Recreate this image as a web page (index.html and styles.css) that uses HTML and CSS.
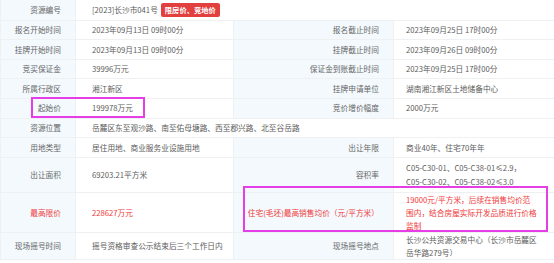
FILE: index.html
```html
<!DOCTYPE html>
<html lang="zh-CN">
<head>
<meta charset="utf-8">
<link rel="stylesheet" href="styles.css">
</head>
<body>
<div class="wrap">
<table class="info">
  <colgroup>
    <col class="c1"><col class="c2"><col class="c3"><col class="c4">
  </colgroup>
  <tr class="r">
    <th>资源编号</th>
    <td colspan="3">[2023]长沙市041号<span class="tag">限房价、竞地价</span></td>
  </tr>
  <tr class="r">
    <th>报名开始时间</th><td>2023年09月13日 09时00分</td>
    <th>报名截止时间</th><td>2023年09月25日 17时00分</td>
  </tr>
  <tr class="r">
    <th>挂牌开始时间</th><td>2023年09月13日 09时00分</td>
    <th>挂牌截止时间</th><td>2023年09月26日 09时00分</td>
  </tr>
  <tr class="r">
    <th>竞买保证金</th><td>39996万元</td>
    <th>保证金到账截止时间</th><td>2023年09月25日 17时00分</td>
  </tr>
  <tr class="r">
    <th>所属行政区</th><td>湘江新区</td>
    <th>挂牌申请单位</th><td>湖南湘江新区土地储备中心</td>
  </tr>
  <tr class="r">
    <th>起始价</th><td>199978万元</td>
    <th>竞价增价幅度</th><td>2000万元</td>
  </tr>
  <tr class="r">
    <th>资源位置</th>
    <td colspan="3">岳麓区东至观沙路、南至佑母塘路、西至郡兴路、北至谷岳路</td>
  </tr>
  <tr class="r">
    <th>用地类型</th><td>居住用地、商业服务业设施用地</td>
    <th>出让年限</th><td>商业40年、住宅70年年</td>
  </tr>
  <tr class="m area">
    <th>出让面积</th><td>69203.21平方米</td>
    <th>容积率</th><td>C05-C30-01、C05-C38-01≤2.9，<br>C05-C30-02、C05-C38-02≤3.0</td>
  </tr>
  <tr class="m red">
    <th>最高限价</th><td>228627万元</td>
    <th>住宅(毛坯)最高销售均价（元/平方米）</th><td>19000元/平方米，后续在销售均价范<br>围内，结合房屋实际开发品质进行价格<br>监制</td>
  </tr>
  <tr class="m last">
    <th>现场摇号时间</th><td>摇号资格审查公示结束后三个工作日内</td>
    <th>现场摇号地点</th><td>长沙公共资源交易中心（长沙市岳麓区<br>岳华路279号）</td>
  </tr>
</table>
<div class="mark mark-a"></div>
<div class="mark mark-b"></div>
</div>
</body>
</html>
```
FILE: styles.css
```css
html, body {
  margin: 0;
  padding: 0;
  background: #ffffff;
}
body {
  font-family: "Noto Sans CJK SC", "Open Sans", sans-serif;
  font-size: 7.7px;
  color: #666666;
}
.wrap {
  position: relative;
  width: 554px;
  height: 263px;
  overflow: hidden;
}
.info {
  border-collapse: collapse;
  table-layout: fixed;
  width: 554px;
  margin-top: -1px;
}
.c1 { width: 75px; }
.c2 { width: 158px; }
.c3 { width: 160px; }
.c4 { width: 161px; }
.info th, .info td {
  border: 1px solid #eef0f2;
  line-height: 11.6px;
  padding-top: 3.5px;
  padding-bottom: 3.5px;
  vertical-align: middle;
  white-space: nowrap;
}
.info th {
  background: #f3f9fd;
  font-weight: normal;
  text-align: right;
  padding-left: 4px;
  padding-right: 14px;
}
.info td {
  text-align: left;
  padding-left: 16px;
  padding-right: 8px;
  color: #5c5c5c;
}
.info td + th + td {
  padding-left: 12px;
}
.info tr.area th, .info tr.area td {
  line-height: 14px;
  padding-top: 3px;
  padding-bottom: 3px;
}
.info tr.red th, .info tr.red td {
  color: #f0383a;
  line-height: 13px;
  padding-top: 0;
  padding-bottom: 0;
}
.info tr.last th, .info tr.last td {
  line-height: 13px;
  padding-top: 0;
  padding-bottom: 0;
}
.tag {
  margin-left: 3px;
  padding: 2px 4px;
  background: #e2403f;
  color: #ffffff;
  font-weight: bold;
  font-size: 7.3px;
  border-radius: 2px;
}
.mark {
  position: absolute;
  border: 2px solid #e63ee6;
  box-sizing: border-box;
}
.mark-a {
  left: 31px;
  top: 97px;
  width: 114px;
  height: 21px;
}
.mark-b {
  left: 243px;
  top: 186px;
  width: 305px;
  height: 46px;
}
```
